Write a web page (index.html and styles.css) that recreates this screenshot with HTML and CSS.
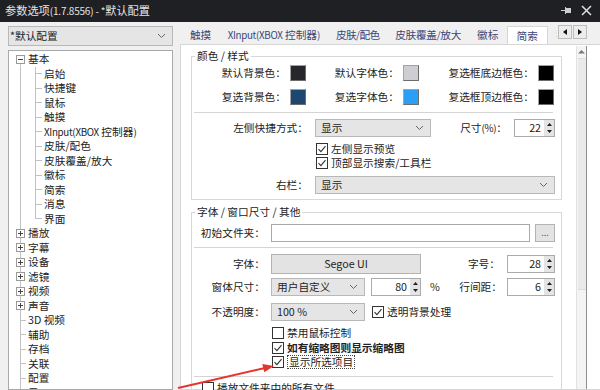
FILE: index.html
```html
<!DOCTYPE html>
<html lang="zh-CN">
<head>
  <meta charset="UTF-8" />
  <title>参数选项</title>
  <link rel="stylesheet" href="styles.css">
</head>
<body>
  <div class="window">
    <div class="titlebar">
      <span class="title">参数选项<span class="lat">(1.7.8556) - *</span>默认配置</span>
      <span class="tb-icons">
        <svg width="10" height="9" viewBox="0 0 10 9"><path d="M0 4.5h4M4.5 1v7M5 2.5h5v4H5z" fill="#cfcfcf" stroke="#cfcfcf"/></svg>
        <svg width="11" height="11" viewBox="0 0 11 11"><path d="M1 1l9 9M10 1l-9 9" stroke="#e0e0e0" stroke-width="1.5"/></svg>
      </span>
    </div>

    <div class="main">
      <div class="sidebar">
        <div class="combo profile">*默认配置
          <svg class="chev" width="9" height="6" viewBox="0 0 9 6"><path d="M1 1l3.5 3.5L8 1" fill="none" stroke="#666"/></svg>
        </div>
        <div class="tree">
          <div class="node n-open"><svg class="exp" width="9" height="9" viewBox="0 0 9 9"><rect x=".5" y=".5" width="8" height="8" fill="#fff" stroke="#9a9a9a"/><path d="M2 4.5h5" stroke="#444"/></svg>基本</div>
          <div class="node n-child">启始</div>
          <div class="node n-child">快捷键</div>
          <div class="node n-child">鼠标</div>
          <div class="node n-child">触摸</div>
          <div class="node n-child"><span class="lat">XInput(XBOX</span>&nbsp;控制器<span class="lat">)</span></div>
          <div class="node n-child">皮肤/配色</div>
          <div class="node n-child">皮肤覆盖/放大</div>
          <div class="node n-child">徽标</div>
          <div class="node n-child">简索</div>
          <div class="node n-child">消息</div>
          <div class="node n-child last">界面</div>
          <div class="node n-closed"><svg class="exp" width="9" height="9" viewBox="0 0 9 9"><rect x=".5" y=".5" width="8" height="8" fill="#fff" stroke="#9a9a9a"/><path d="M2 4.5h5M4.5 2v5" stroke="#444"/></svg>播放</div>
          <div class="node n-closed"><svg class="exp" width="9" height="9" viewBox="0 0 9 9"><rect x=".5" y=".5" width="8" height="8" fill="#fff" stroke="#9a9a9a"/><path d="M2 4.5h5M4.5 2v5" stroke="#444"/></svg>字幕</div>
          <div class="node n-closed"><svg class="exp" width="9" height="9" viewBox="0 0 9 9"><rect x=".5" y=".5" width="8" height="8" fill="#fff" stroke="#9a9a9a"/><path d="M2 4.5h5M4.5 2v5" stroke="#444"/></svg>设备</div>
          <div class="node n-closed"><svg class="exp" width="9" height="9" viewBox="0 0 9 9"><rect x=".5" y=".5" width="8" height="8" fill="#fff" stroke="#9a9a9a"/><path d="M2 4.5h5M4.5 2v5" stroke="#444"/></svg>滤镜</div>
          <div class="node n-closed"><svg class="exp" width="9" height="9" viewBox="0 0 9 9"><rect x=".5" y=".5" width="8" height="8" fill="#fff" stroke="#9a9a9a"/><path d="M2 4.5h5M4.5 2v5" stroke="#444"/></svg>视频</div>
          <div class="node n-closed"><svg class="exp" width="9" height="9" viewBox="0 0 9 9"><rect x=".5" y=".5" width="8" height="8" fill="#fff" stroke="#9a9a9a"/><path d="M2 4.5h5M4.5 2v5" stroke="#444"/></svg>声音</div>
          <div class="node n-leaf">3D 视频</div>
          <div class="node n-leaf">辅助</div>
          <div class="node n-leaf">存档</div>
          <div class="node n-leaf">关联</div>
          <div class="node n-leaf">配置</div>
          <div class="node n-leaf">界面</div>
        </div>
      </div>

      <div class="pane">
        <div class="tabbar">
          <div class="tabs">
            <span class="tab">触摸</span>
            <span class="tab"><span class="lat">XInput(XBOX</span>&nbsp;控制器<span class="lat">)</span></span>
            <span class="tab tight">皮肤<span class="lat">/</span>配色</span>
            <span class="tab tight2">皮肤覆盖<span class="lat">/</span>放大</span>
            <span class="tab">徽标</span>
            <span class="tab on">简索</span>
            <span class="tab">视频</span>
          </div>
          <div class="tab-arrows">
            <span class="tarr"><svg width="4" height="6" viewBox="0 0 4 6"><path d="M4 0v6L0 3z" fill="#111"/></svg></span>
            <span class="tarr"><svg width="4" height="6" viewBox="0 0 4 6"><path d="M0 0v6l4-3z" fill="#111"/></svg></span>
          </div>
        </div>

        <div class="page">
          <div class="page-body">
            <fieldset class="group g1">
              <legend>颜色 / 样式</legend>
              <div class="colors">
                <div class="cell">默认背景色：<span class="sw" style="background:#26262b"></span></div>
                <div class="cell">默认字体色：<span class="sw" style="background:#cdcdd3"></span></div>
                <div class="cell">复选框底边框色：<span class="sw" style="background:#000"></span></div>
                <div class="cell">复选背景色：<span class="sw" style="background:#1d4670"></span></div>
                <div class="cell">复选字体色：<span class="sw" style="background:#2a9ff5"></span></div>
                <div class="cell">复选框顶边框色：<span class="sw" style="background:#000"></span></div>
              </div>
              <div class="sep"></div>
              <div class="frow">
                <span class="lbl">左侧快捷方式：</span>
                <div class="combo c-side">显示<svg class="chev" width="9" height="6" viewBox="0 0 9 6"><path d="M1 1l3.5 3.5L8 1" fill="none" stroke="#666"/></svg></div>
                <span class="lbl-r">尺寸<span class="lat">(%)</span>：</span>
                <div class="spin s-size"><span class="val">22</span><span class="arrows"><svg width="9" height="16" viewBox="0 0 9 16"><path d="M2 6h5L4.5 3zM2 10h5l-2.5 3z" fill="#222"/></svg></span></div>
              </div>
              <div class="chks">
                <div class="chk"><svg class="box" width="12" height="12" viewBox="0 0 12 12"><rect x=".5" y=".5" width="11" height="11" fill="#fff" stroke="#333"/><path d="M2.5 6.2l2.4 2.4L9.5 3.2" fill="none" stroke="#333" stroke-width="1.1"/></svg>左侧显示预览</div>
                <div class="chk"><svg class="box" width="12" height="12" viewBox="0 0 12 12"><rect x=".5" y=".5" width="11" height="11" fill="#fff" stroke="#333"/><path d="M2.5 6.2l2.4 2.4L9.5 3.2" fill="none" stroke="#333" stroke-width="1.1"/></svg>顶部显示搜索/工具栏</div>
              </div>
              <div class="frow r-right">
                <span class="lbl">右栏：</span>
                <div class="combo c-wide">显示<svg class="chev" width="9" height="6" viewBox="0 0 9 6"><path d="M1 1l3.5 3.5L8 1" fill="none" stroke="#666"/></svg></div>
              </div>
            </fieldset>

            <fieldset class="group g2">
              <legend>字体 / 窗口尺寸 / 其他</legend>
              <div class="frow r-folder">
                <span class="lbl">初始文件夹：</span>
                <div class="edit"></div>
                <div class="btn b-dots">...</div>
              </div>
              <div class="sep s2"></div>
              <div class="frow r-font">
                <span class="lbl">字体：</span>
                <div class="btn b-font">Segoe UI</div>
                <span class="lbl-r">字号：</span>
                <div class="spin s-num"><span class="val">28</span><span class="arrows"><svg width="9" height="16" viewBox="0 0 9 16"><path d="M2 6h5L4.5 3zM2 10h5l-2.5 3z" fill="#222"/></svg></span></div>
              </div>
              <div class="frow r-size">
                <span class="lbl">窗体尺寸：</span>
                <div class="combo c-mid">用户自定义<svg class="chev" width="9" height="6" viewBox="0 0 9 6"><path d="M1 1l3.5 3.5L8 1" fill="none" stroke="#666"/></svg></div>
                <div class="spin s-pct"><span class="val">80</span><span class="arrows"><svg width="9" height="16" viewBox="0 0 9 16"><path d="M2 6h5L4.5 3zM2 10h5l-2.5 3z" fill="#222"/></svg></span></div>
                <span class="pct">%</span>
                <span class="lbl-r">行间距：</span>
                <div class="spin s-num"><span class="val">6</span><span class="arrows"><svg width="9" height="16" viewBox="0 0 9 16"><path d="M2 6h5L4.5 3zM2 10h5l-2.5 3z" fill="#222"/></svg></span></div>
              </div>
              <div class="frow r-opac">
                <span class="lbl">不透明度：</span>
                <div class="combo c-mid">100 %<svg class="chev" width="9" height="6" viewBox="0 0 9 6"><path d="M1 1l3.5 3.5L8 1" fill="none" stroke="#666"/></svg></div>
                <div class="chk inline"><svg class="box" width="12" height="12" viewBox="0 0 12 12"><rect x=".5" y=".5" width="11" height="11" fill="#fff" stroke="#333"/><path d="M2.5 6.2l2.4 2.4L9.5 3.2" fill="none" stroke="#333" stroke-width="1.1"/></svg>透明背景处理</div>
              </div>
              <div class="chks c2">
                <div class="chk"><svg class="box" width="12" height="12" viewBox="0 0 12 12"><rect x=".5" y=".5" width="11" height="11" fill="#fff" stroke="#333"/></svg>禁用鼠标控制</div>
                <div class="chk bold"><svg class="box" width="12" height="12" viewBox="0 0 12 12"><rect x=".5" y=".5" width="11" height="11" fill="#fff" stroke="#333"/><path d="M2.5 6.2l2.4 2.4L9.5 3.2" fill="none" stroke="#333" stroke-width="1.1"/></svg>如有缩略图则显示缩略图</div>
                <div class="chk"><svg class="box" width="12" height="12" viewBox="0 0 12 12"><rect x=".5" y=".5" width="11" height="11" fill="#fff" stroke="#333"/><path d="M2.5 6.2l2.4 2.4L9.5 3.2" fill="none" stroke="#333" stroke-width="1.1"/></svg><span class="focus">显示所选项目</span></div>
              </div>
              <div class="sep s3"></div>
              <div class="chk c3"><svg class="box" width="12" height="12" viewBox="0 0 12 12"><rect x=".5" y=".5" width="11" height="11" fill="#fff" stroke="#333"/></svg>播放文件夹中的所有文件</div>
            </fieldset>
          </div>
          <div class="vscroll">
            <svg class="up" width="7" height="5" viewBox="0 0 7 5"><path d="M0 4.5h7L3.5 1z" fill="#777"/></svg>
            <div class="thumb"></div>
          </div>
        </div>
      </div>
    </div>

    <svg class="arrow" width="600" height="390" viewBox="0 0 600 390">
      <line x1="178" y1="388" x2="265" y2="368" stroke="#e3362d" stroke-width="2"/>
      <polygon points="274,366 262.3,364 264.3,372.2" fill="#e3362d"/>
    </svg>
  </div>
</body>
</html>
```

FILE: styles.css
```css
* { box-sizing: border-box; }
body {
  margin: 0; width: 600px; height: 390px; overflow: hidden;
  background: #f0f0f0; color: #222;
  font: 10.7px/14px "Noto Sans CJK SC", "Liberation Sans", sans-serif;
}
.window { position: relative; height: 390px; display: flex; flex-direction: column; }
.lat { font-size: 9.8px; letter-spacing: -0.3px; }

/* title bar */
.titlebar {
  flex: none; height: 22px; background: #1f2023; color: #e4e4e4;
  display: flex; align-items: center; justify-content: space-between;
  padding: 0 8px 1px 5px;
}
.title { font-size: 11.2px; }
.title .lat { font-size: 10px; letter-spacing: -0.2px; }
.tb-icons { display: flex; align-items: center; gap: 10px; }

.main { flex: 1; display: flex; min-height: 0; }

/* left side */
.sidebar {
  flex: none; width: 173px; padding: 4px 0 0 8px;
  display: flex; flex-direction: column; gap: 4px;
}
.combo {
  height: 18px; border: 1px solid #b8b8b8; background: #e5e5e5;
  display: flex; align-items: center; justify-content: space-between;
  padding: 0 6px 0 5px; line-height: 16px; white-space: nowrap;
}
.profile { height: 20px; padding-left: 1px; }
.tree {
  flex: 1; min-height: 0; overflow: hidden;
  background: #fff; border: 1px solid #a9a9a9; padding-top: 1px;
}
.node {
  height: 14.5px; line-height: 14.5px; white-space: nowrap;
  display: flex; align-items: center;
  background-repeat: no-repeat;
}
.exp { flex: none; margin-right: 3px; }
.n-open {
  padding-left: 7px;
  background-image: linear-gradient(#c2c2c2, #c2c2c2);
  background-position: 11px 100%; background-size: 1px 50%;
}
.n-closed {
  padding-left: 7px;
  background-image: linear-gradient(#c2c2c2, #c2c2c2);
  background-position: 11px 0; background-size: 1px 100%;
}
.n-child {
  padding-left: 35px;
  background-image: linear-gradient(#c2c2c2, #c2c2c2), linear-gradient(#c2c2c2, #c2c2c2), linear-gradient(#c2c2c2, #c2c2c2);
  background-position: 11px 0, 26px 0, 26px 50%;
  background-size: 1px 100%, 1px 100%, 7px 1px;
}
.n-child.last { background-size: 1px 100%, 1px 50%, 7px 1px; }
.n-leaf {
  padding-left: 19px;
  background-image: linear-gradient(#c2c2c2, #c2c2c2), linear-gradient(#c2c2c2, #c2c2c2);
  background-position: 11px 0, 11px 50%;
  background-size: 1px 100%, 6px 1px;
}

/* right side */
.pane { flex: 1; min-width: 0; display: flex; flex-direction: column; margin-left: 7px; }
.tabbar { flex: none; height: 22px; display: flex; align-items: flex-end; }
.tabs { flex: none; width: 377px; display: flex; align-items: flex-end; overflow: hidden; padding-left: 1.7px; }
.tab {
  flex: none; height: 18px; line-height: 17px; padding: 0 8.2px;
  color: #3a4678; white-space: nowrap;
}
.tab.tight { letter-spacing: -0.7px; padding: 0 7.8px; }
.tab.tight2 { letter-spacing: -0.3px; padding: 0 7.8px; }
.tab.on {
  background: #fff; border: 1px solid #d6d6d6; border-bottom: none;
  height: 19px; margin-bottom: -1px; padding: 0 9px; position: relative;
}
.tab-arrows { flex: none; display: flex; gap: 1px; margin: 0 0 2px 1px; align-self: center; }
.tarr {
  width: 14px; height: 14px; background: #ececec; border: 1px solid #bdbdbd;
  display: flex; align-items: center; justify-content: center;
}

.page {
  flex: 1; min-height: 0; display: flex;
  background: #fff; border: 1px solid #d6d6d6; border-right: none;
}
.page-body { flex: 1; min-width: 0; padding: 4px 14px 0 10px; }
.vscroll {
  flex: none; width: 11px; margin: 1px 13px 0 0;
  background: #f4f4f4; border-left: 1px solid #e2e2e2; border-right: 1px solid #8e8e8e;
  display: flex; flex-direction: column; align-items: center;
}
.vscroll .up { margin-top: 3px; }
.thumb { width: 8px; height: 232px; margin-top: 4px; background: #eaeaea; border-top: 1px solid #dcdcdc; border-bottom: 1px solid #dcdcdc; }

/* group boxes */
.group { margin: 0; padding: 0 6px 5px 0; border: 1px solid #d8d8d8; min-width: 0; }
.group legend { padding: 0 2px; margin-left: 3px; line-height: 14px; height: 14px; }
.g2 { margin-top: 5px; padding-bottom: 10px; }

.colors {
  display: grid; grid-template-columns: 114px 113px 1fr;
  row-gap: 8px; margin-top: 2px; padding-right: 1px;
}
.cell { display: flex; justify-content: flex-end; align-items: center; height: 16px; white-space: nowrap; }
.sw {
  width: 16px; height: 16px; margin-left: 4px;
  border: 1px solid #a3a3a3; border-right-color: #6c6c6c; border-bottom-color: #6c6c6c;
}
.sep { height: 1px; background: #d4d4d4; margin: 7px 2px 0 2px; }

.frow { display: flex; align-items: center; height: 18px; margin-top: 6px; white-space: nowrap; }
.lbl { flex: none; width: 116px; margin-right: 7px; text-align: right; }
.lbl-r { flex: 1; text-align: right; margin-right: 7px; }
.c-side { width: 116px; }
.c-wide { flex: 1; }
.r-right { margin-top: 6px; }

.spin {
  flex: none; height: 18px; background: #fff; border: 1px solid #ababab;
  display: flex; align-items: stretch;
}
.spin .val { flex: 1; text-align: right; padding-right: 3px; line-height: 16px; }
.spin .arrows { width: 10px; background: #e4e4e4; display: flex; align-items: center; justify-content: center; }
.s-size { width: 41px; }
.s-num { width: 48px; }
.s-pct { width: 50px; margin-left: 6px; }

.chks { margin-top: 5px; padding-left: 124px; }
.chk { display: flex; align-items: center; height: 14px; white-space: nowrap; }
.chk .box { flex: none; margin-right: 3px; }
.chk.bold { font-weight: bold; }
.focus { border: 1px dotted #444; line-height: 12px; padding: 0 1px; }

/* second group */
.g2 .lbl { width: 73px; margin-right: 6px; }
.r-folder { margin-top: 5px; }
.edit { flex: none; width: 259px; height: 18px; background: #fff; border: 1px solid #a9a9a9; }
.btn {
  flex: none; height: 18px; background: #e3e3e3; border: 1px solid #b3b3b3;
  display: flex; align-items: center; justify-content: center; line-height: 14px;
}
.b-dots { width: 20px; margin-left: 5px; font-size: 9px; color: #555; }
.s2 { margin-top: 5px; }
.r-font { height: 20px; }
.b-font { width: 150px; height: 20px; }
.r-size { margin-top: 4px; }
.c-mid { width: 94px; }
.pct { margin-left: 9px; }
.r-size .lbl-r { margin-right: 5px; }
.r-opac { margin-top: 7px; }
.chk.inline { margin-left: 7px; }
.c2 { padding-left: 80px; }
.c2 .chk { height: 14.5px; }
.s3 { margin-top: 6px; }
.c3 { margin: 4px 0 0 10px; }

/* annotation arrow drawn over the dialog */
.arrow { position: absolute; left: 0; top: 0; pointer-events: none; }
```
